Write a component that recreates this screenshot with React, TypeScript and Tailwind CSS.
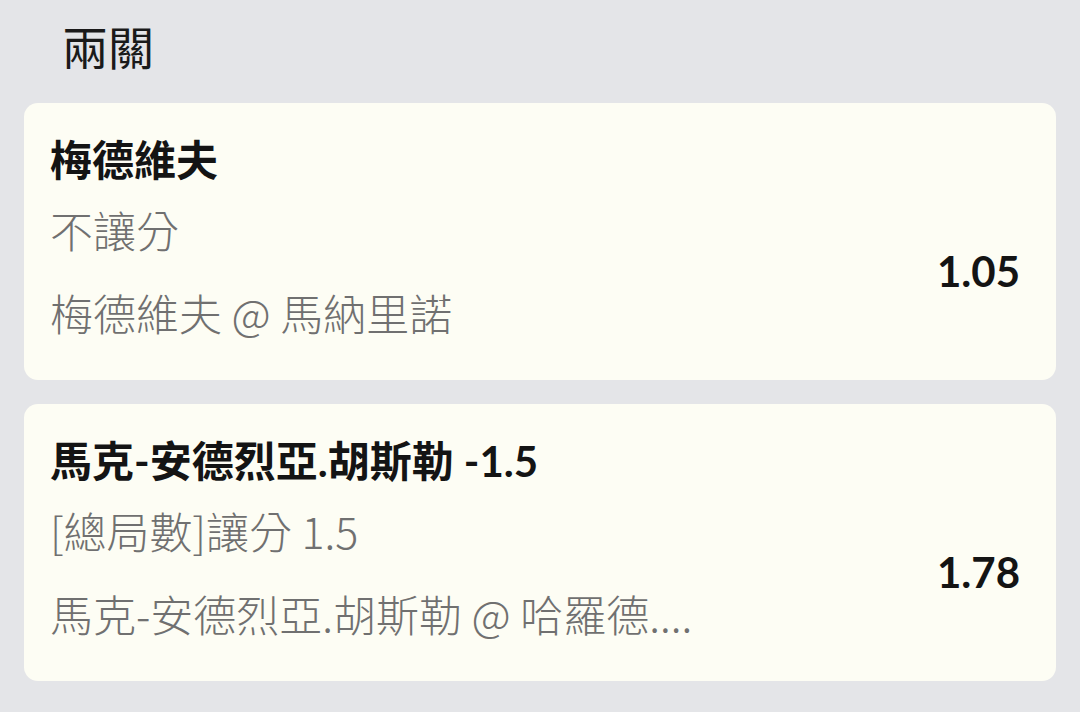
import React from 'react';

type Leg = {
  name: string;
  market: string;
  match: string;
  odds: string;
};

const legs: Leg[] = [
  { name: '梅德維夫', market: '不讓分', match: '梅德維夫 @ 馬納里諾', odds: '1.05' },
  {
    name: '馬克-安德烈亞.胡斯勒 -1.5',
    market: '[總局數]讓分 1.5',
    match: '馬克-安德烈亞.胡斯勒 @ 哈羅德....',
    odds: '1.78',
  },
];

const latin = { fontFamily: 'Lato, "Noto Sans CJK TC", sans-serif' };
const cjk = { fontFamily: '"Noto Sans CJK TC", sans-serif' };

const LegCard: React.FC<{ leg: Leg }> = ({ leg }) => (
  <div className="h-[277px] rounded-[14px] bg-[#fdfdf4] pl-[26px] pr-[36px] pt-[28px]">
    <div className="text-[42px] leading-[58px] font-bold text-[#141414]">{leg.name}</div>
    <div className="mt-[11px] flex items-center justify-between">
      <div className="flex flex-col gap-[25px] text-[43px] leading-[58px] font-light text-[#707070]" style={cjk}>
        <div>{leg.market}</div>
        <div>{leg.match}</div>
      </div>
      <div className="text-[42px] font-bold leading-none text-[#141414]">{leg.odds}</div>
    </div>
  </div>
);

export default function App() {
  return (
    <div className="min-h-screen bg-[#e4e5e8] px-6" style={latin}>
      <div className="flex h-[103px] items-center pl-[38px] pb-[12px] text-[46px] font-normal text-[#1a1a1a]" style={cjk}>
        兩關
      </div>
      <div className="flex flex-col gap-6 pb-8">
        {legs.map((leg) => (
          <LegCard key={leg.odds} leg={leg} />
        ))}
      </div>
    </div>
  );
}
